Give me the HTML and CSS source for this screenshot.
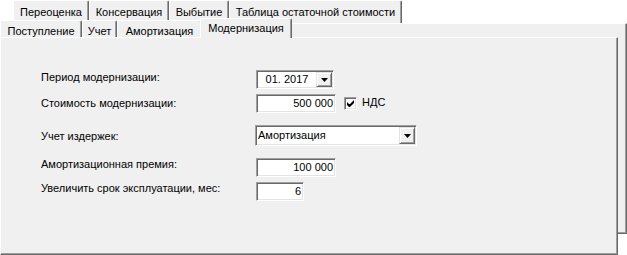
FILE: index.html
```html
<!DOCTYPE html>
<html lang="ru">
<head>
<meta charset="utf-8">
<title>Модернизация</title>
<link rel="stylesheet" href="styles.css">
</head>
<body>
<div class="stage">
  <div class="book book--back">
    <div class="tabrow tabrow--back">
      <div class="tab tab--b1">Переоценка</div>
      <div class="tab tab--b2">Консервация</div>
      <div class="tab tab--b3">Выбытие</div>
      <div class="tab tab--b4">Таблица остаточной стоимости</div>
    </div>
    <div class="sheet sheet--back"></div>
  </div>
  <div class="book book--front">
    <div class="tabrow tabrow--front">
      <div class="tab tab--f1">Поступление</div>
      <div class="tab tab--f2">Учет</div>
      <div class="tab tab--f3">Амортизация</div>
      <div class="tab tab--f4 tab--active">Модернизация</div>
    </div>
    <div class="sheet sheet--front">
      <div class="form">
        <div class="row">
          <div class="label label--o1">Период модернизации:</div>
          <div class="combo combo--date">
            <span class="combo-text combo-text--center">01. 2017</span>
            <span class="dd dd--date"><svg width="7" height="4" viewBox="0 0 7 4"><polygon points="0,0 7,0 3.5,4" fill="#000"/></svg></span>
          </div>
        </div>
        <div class="row">
          <div class="label label--o3">Стоимость модернизации:</div>
          <div class="field field--w80">500 000</div>
          <div class="check"><svg width="11" height="11" viewBox="0 0 11 11"><polygon points="2,4 4,6 5,6 9,2 9,5 5,9 4,9 2,7" fill="#000"/></svg></div>
          <div class="check-label">НДС</div>
        </div>
        <div class="row row--gap">
          <div class="label label--o5">Учет издержек:</div>
          <div class="combo combo--list">
            <span class="combo-text">Амортизация</span>
            <span class="dd dd--list"><svg width="7" height="4" viewBox="0 0 7 4"><polygon points="0,0 7,0 3.5,4" fill="#000"/></svg></span>
          </div>
        </div>
        <div class="row row--gap">
          <div class="label">Амортизационная премия:</div>
          <div class="field field--w80">100 000</div>
        </div>
        <div class="row">
          <div class="label">Увеличить срок эксплуатации, мес:</div>
          <div class="field field--w48">6</div>
        </div>
      </div>
    </div>
  </div>
</div>
</body>
</html>
```

FILE: styles.css
```css
body {
  margin: 0;
  background: #fff;
  font: 11px/13px "Liberation Sans", Arial, sans-serif;
  color: #000;
}

.stage {
  display: grid;
  width: 627px;
  height: 255px;
  overflow: hidden;
}

.book {
  grid-area: 1 / 1;
  display: flex;
  flex-direction: column;
}

.book--back {
  margin-left: 13px;
  width: 614px;
  height: 234px;
}

.book--front {
  margin-top: 18px;
  width: 618px;
  height: 237px;
  z-index: 1;
}

.tabrow {
  display: flex;
  align-items: flex-end;
  flex: none;
}

.tabrow--back { height: 23px; }
.tabrow--front { height: 19px; }

.tab {
  box-sizing: border-box;
  flex: none;
  background: #f0f0f0;
  border-top: 1px solid #fff;
  border-left: 1px solid #fff;
  border-right: 1px solid #696969;
  box-shadow: inset -1px 0 #a0a0a0;
  border-top-left-radius: 2px;
  border-top-right-radius: 2px;
  text-align: center;
  white-space: nowrap;
}

.tabrow--back .tab { height: 23px; padding-top: 5px; }
.tabrow--front .tab { height: 17px; padding-top: 4px; }

.tab--b1 { width: 76px; }
.tab--b2 { width: 80px; }
.tab--b3 { width: 60px; }
.tab--b4 { width: 173px; }

.tab--f1 { width: 82px; }
.tab--f2 { width: 35px; }
.tab--f3 { width: 85px; }
.tab--f4 { width: 92px; }

.tabrow--front .tab--active {
  height: 20px;
  padding-top: 3px;
  margin-bottom: -1px;
  margin-left: -2px;
  z-index: 1;
}

.sheet {
  box-sizing: border-box;
  background: #f0f0f0;
  border-top: 1px solid #fff;
  border-left: 1px solid #fff;
  border-right: 1px solid #696969;
  border-bottom: 1px solid #696969;
  box-shadow: inset -1px -1px #a0a0a0;
}

.sheet--back { flex: 1; }

.sheet--front {
  flex: 1;
  padding: 32px 0 0 40px;
}

.form {
  display: flex;
  flex-direction: column;
}

.row {
  display: flex;
  align-items: flex-start;
  margin-top: 5px;
}

.row:first-child { margin-top: 0; }
.row--gap { margin-top: 12px; }

.label {
  width: 215px;
  flex: none;
  white-space: nowrap;
}

.label--o1 { padding-top: 1px; }
.label--o3 { padding-top: 3px; }
.label--o5 { padding-top: 5px; }

.field,
.combo,
.check {
  box-sizing: border-box;
  background: #fff;
  border: 1px solid;
  border-color: #a0a0a0 #fff #fff #a0a0a0;
  box-shadow: inset 1px 1px #696969, inset -1px -1px #e3e3e3;
  flex: none;
}

.field {
  height: 19px;
  display: flex;
  align-items: center;
  justify-content: flex-end;
  padding: 0 2px 0 3px;
}

.field--w80 { width: 80px; }
.field--w48 { width: 48px; }

.combo {
  display: flex;
  align-items: center;
  padding: 1px;
}

.combo--date {
  width: 78px;
  height: 19px;
}

.combo--list {
  width: 162px;
  height: 21px;
  margin-left: -1px;
}

.combo-text {
  flex: 1;
  padding-left: 1px;
  white-space: nowrap;
}

.combo-text--center {
  text-align: center;
  padding-left: 0;
}

.dd {
  box-sizing: border-box;
  flex: none;
  width: 16px;
  background: #f0f0f0;
  border: 1px solid;
  border-color: #e3e3e3 #696969 #696969 #e3e3e3;
  box-shadow: inset 1px 1px #fff, inset -1px -1px #a0a0a0;
  display: flex;
  align-items: center;
  justify-content: center;
}

.dd svg { display: block; }

.dd--date { height: 15px; }
.dd--list { height: 17px; }

.check {
  width: 13px;
  height: 13px;
  margin: 3px 0 0 8px;
}

.check svg { display: block; }

.check-label {
  margin-left: 5px;
  padding-top: 2px;
  white-space: nowrap;
}
```
